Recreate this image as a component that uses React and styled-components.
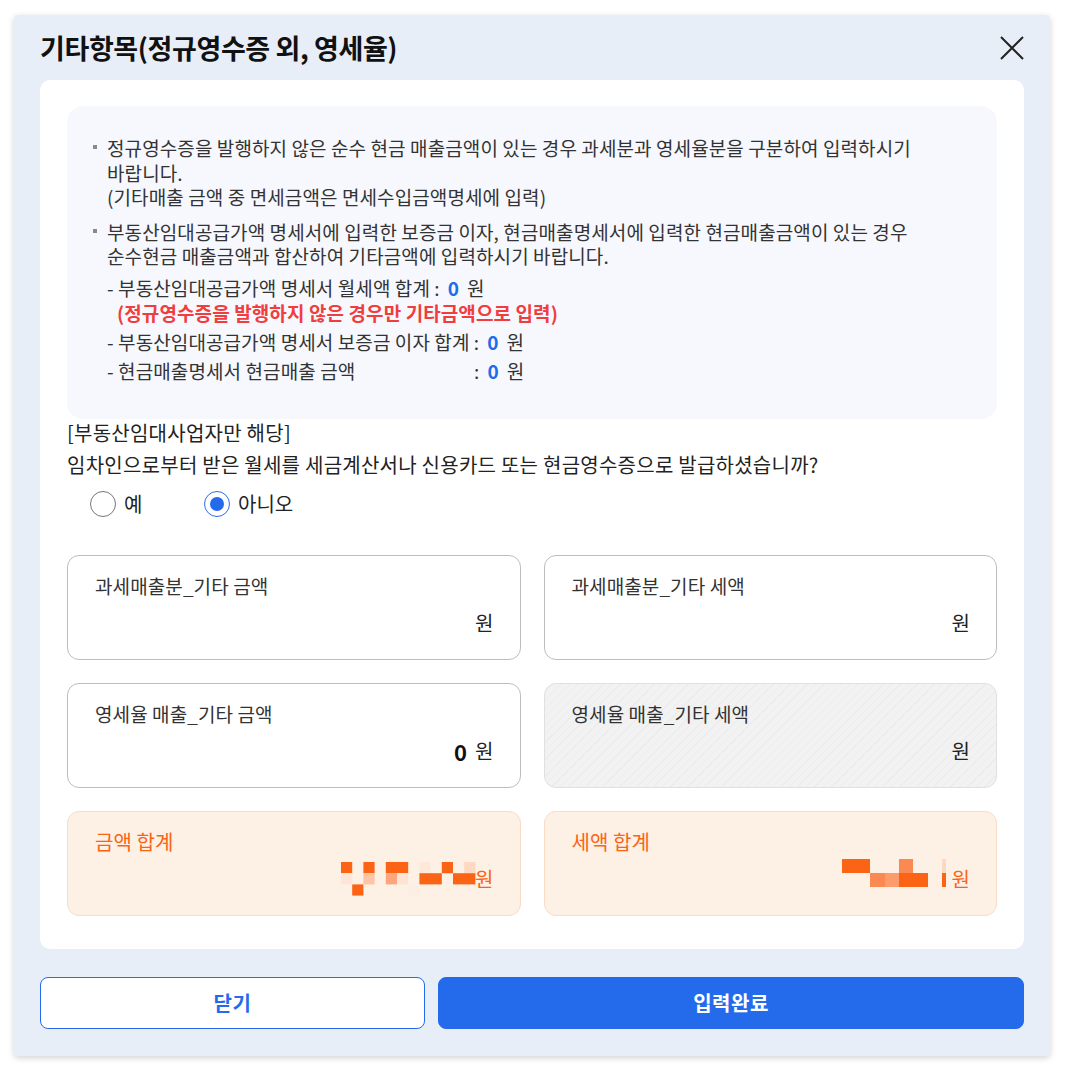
import React, { useState } from "react";
import styled, { createGlobalStyle } from "styled-components";

const GlobalStyle = createGlobalStyle`
  * { box-sizing: border-box; }
  body {
    margin: 0;
    background: #ffffff;
    font-family: "Noto Sans CJK KR", "Noto Sans", sans-serif;
    color: #222;
  }
`;

const Modal = styled.div`
  margin: 15px 15px 15px 14px;
  width: 1036px;
  background: #e8eef8;
  border-radius: 4px;
  box-shadow: 0 2px 6px rgba(0, 0, 0, 0.18);
  padding: 0 26px 27px;
`;

const Header = styled.div`
  height: 65px;
  display: flex;
  align-items: center;
  justify-content: space-between;
`;

const Title = styled.h1`
  margin: 0;
  font-size: 27px;
  font-weight: 600;
  color: #111;
  letter-spacing: -0.4px;
`;

const CloseButton = styled.button`
  display: flex;
  align-items: center;
  justify-content: center;
  width: 30px;
  height: 30px;
  margin-right: -3px;
  padding: 0;
  background: transparent;
  border: none;
  cursor: pointer;
`;

const Card = styled.div`
  background: #ffffff;
  border-radius: 10px;
  padding: 26px 27px 33px;
`;

const InfoBox = styled.div`
  background: #f6f8fe;
  border-radius: 16px;
  padding: 30px 26px 36px;
  font-size: 19px;
  line-height: 24.5px;
  color: #333;
  letter-spacing: 0.1px;
`;

const Bullet = styled.div`
  position: relative;
  padding-left: 14px;
  & + & {
    margin-top: 10px;
  }
  &::before {
    content: "";
    position: absolute;
    left: 0;
    top: 9px;
    width: 4px;
    height: 4px;
    background: #8a8a8a;
  }
`;

const SubList = styled.div`
  margin-top: 6px;
`;

const SubItem = styled.div`
  margin-top: ${(p) => (p.$first ? "0" : "4px")};
  line-height: 25px;
`;

const SubLabel = styled.span`
  display: inline-block;
  width: ${(p) => (p.$width ? `${p.$width}px` : "auto")};
`;

const Zero = styled.b`
  color: #1d6ce9;
  font-weight: 700;
  margin: 0 8px 0 8px;
`;

const RedNote = styled.div`
  color: #f03d3d;
  font-weight: 700;
  padding-left: 10px;
  line-height: 25px;
`;

const Question = styled.div`
  margin-top: -2px;
  font-size: 20px;
  line-height: 32px;
  color: #222;
  letter-spacing: 0.25px;
`;

const RadioRow = styled.div`
  margin-top: 8px;
  height: 30px;
  display: flex;
  align-items: center;
  padding-left: 23px;
`;

const RadioLabel = styled.label`
  display: flex;
  align-items: center;
  gap: 8px;
  width: ${(p) => p.$width}px;
  font-size: 20px;
  color: #222;
  cursor: pointer;
`;

const RadioCircle = styled.span`
  width: 26px;
  height: 26px;
  border-radius: 50%;
  border: 1px solid ${(p) => (p.$checked ? "#2b6fe8" : "#777")};
  background: #fff;
  display: flex;
  align-items: center;
  justify-content: center;
  &::after {
    content: "";
    width: 14px;
    height: 14px;
    border-radius: 50%;
    background: #246beb;
    display: ${(p) => (p.$checked ? "block" : "none")};
  }
`;

const FieldGrid = styled.div`
  margin-top: 36px;
  display: grid;
  grid-template-columns: 1fr 1fr;
  gap: 23px;
`;

const Field = styled.div`
  height: 105px;
  border-radius: 12px;
  padding: 18px 26px 0 27px;
  border: 1px solid
    ${(p) =>
      p.$variant === "sum"
        ? "#f8dcc6"
        : p.$variant === "disabled"
        ? "#e0e0e0"
        : "#bdbdbd"};
  background: ${(p) =>
    p.$variant === "sum"
      ? "#fdf0e5"
      : p.$variant === "disabled"
      ? "repeating-linear-gradient(135deg, #f2f2f2 0 5px, #ececec 5px 6px)"
      : "#ffffff"};
`;

const FieldLabel = styled.div`
  font-size: ${(p) => (p.$sum ? "20px" : "19px")};
  line-height: 24px;
  letter-spacing: 0.1px;
  color: ${(p) => (p.$sum ? "#fa6414" : "#333")};
`;

const ValueRow = styled.div`
  margin-top: 8px;
  height: 34px;
  display: flex;
  align-items: center;
  justify-content: flex-end;
`;

const Amount = styled.span`
  font-size: 22px;
  font-weight: 600;
  color: #111;
  margin-right: 8px;
`;

const Won = styled.span`
  font-size: 20px;
  color: ${(p) => (p.$sum ? "#fa6414" : "#222")};
`;

const Footer = styled.div`
  margin-top: 28px;
  display: flex;
  gap: 13px;
`;

const Button = styled.button`
  height: 52px;
  border-radius: 8px;
  font-family: inherit;
  font-size: 20px;
  font-weight: 700;
  letter-spacing: 0.5px;
  cursor: pointer;
  border: 1px solid #246beb;
  ${(p) =>
    p.$primary
      ? `flex: 1; background: #246beb; color: #fff;`
      : `width: 385px; background: #fff; color: #246beb;`}
`;

const OR = "#fa6414";

// 합계 값은 모자이크 처리되어 있음
const leftMosaic = [
  [0, 0, 1, OR], [2, 0, 1, OR], [4, 0, 2, OR], [7, 0, 1, "#fde8da"], [9, 0, 1, OR], [11, 0, 1, "#fed9c2"],
  [0, 1, 1, "#fde6d8"], [2, 1, 1, "#fec4a4"], [4, 1, 1, "#fda57e"], [5, 1, 1, "#fde3d4"], [7, 1, 2, OR], [10, 1, 2, OR],
  [1, 2, 1, OR], [6, 2, 1, "#fdeee4"],
];

const rightMosaic = [
  [0, -3, 28, 14, OR], [57, -3, 14, 14, "#fb8a52"], [100, -3, 4, 14, "#fdd9c2"],
  [28, 11, 15, 14, "#fb8a52"], [43, 11, 14, 14, "#fc9c6c"], [57, 11, 29, 14, OR], [100, 11, 4, 14, OR],
];

const LeftMosaic = () => (
  <svg width="134" height="34" style={{ overflow: "visible" }}>
    {leftMosaic.map(([c, r, w, fill], i) => (
      <rect key={i} x={c * 11.2} y={r * 11.2} width={w * 11.2} height="11.2" fill={fill} />
    ))}
  </svg>
);

const RightMosaic = () => (
  <svg width="104" height="34" style={{ overflow: "visible", marginRight: 6 }}>
    {rightMosaic.map(([x, y, w, h, fill], i) => (
      <rect key={i} x={x} y={y} width={w} height={h} fill={fill} />
    ))}
  </svg>
);

const CloseIcon = () => (
  <svg width="26" height="26" viewBox="0 0 26 26">
    <path d="M2 2 L24 24 M24 2 L2 24" stroke="#222" strokeWidth="2" fill="none" />
  </svg>
);

const App = () => {
  const [issued, setIssued] = useState(false);

  return (
    <>
      <GlobalStyle />
      <Modal>
        <Header>
          <Title>기타항목(정규영수증 외, 영세율)</Title>
          <CloseButton>
            <CloseIcon />
          </CloseButton>
        </Header>

        <Card>
          <InfoBox>
            <Bullet>
              정규영수증을 발행하지 않은 순수 현금 매출금액이 있는 경우 과세분과 영세율분을 구분하여 입력하시기
              <br />
              바랍니다.
              <br />
              (기타매출 금액 중 면세금액은 면세수입금액명세에 입력)
            </Bullet>
            <Bullet>
              부동산임대공급가액 명세서에 입력한 보증금 이자, 현금매출명세서에 입력한 현금매출금액이 있는 경우
              <br />
              순수현금 매출금액과 합산하여 기타금액에 입력하시기 바랍니다.
              <SubList>
                <SubItem $first>
                  - <SubLabel>부동산임대공급가액 명세서 월세액 합계 :</SubLabel>
                  <Zero>0</Zero>원
                </SubItem>
                <RedNote>(정규영수증을 발행하지 않은 경우만 기타금액으로 입력)</RedNote>
                <SubItem>
                  - <SubLabel>부동산임대공급가액 명세서 보증금 이자 합계 :</SubLabel>
                  <Zero>0</Zero>원
                </SubItem>
                <SubItem>
                  - <SubLabel $width={356}>현금매출명세서 현금매출 금액</SubLabel>:
                  <Zero>0</Zero>원
                </SubItem>
              </SubList>
            </Bullet>
          </InfoBox>

          <Question>
            [부동산임대사업자만 해당]
            <br />
            임차인으로부터 받은 월세를 세금계산서나 신용카드 또는 현금영수증으로 발급하셨습니까?
          </Question>

          <RadioRow>
            <RadioLabel $width={114} onClick={() => setIssued(true)}>
              <RadioCircle $checked={issued} />
              예
            </RadioLabel>
            <RadioLabel $width={120} onClick={() => setIssued(false)}>
              <RadioCircle $checked={!issued} />
              아니오
            </RadioLabel>
          </RadioRow>

          <FieldGrid>
            <Field>
              <FieldLabel>과세매출분_기타 금액</FieldLabel>
              <ValueRow>
                <Won>원</Won>
              </ValueRow>
            </Field>
            <Field>
              <FieldLabel>과세매출분_기타 세액</FieldLabel>
              <ValueRow>
                <Won>원</Won>
              </ValueRow>
            </Field>
            <Field>
              <FieldLabel>영세율 매출_기타 금액</FieldLabel>
              <ValueRow>
                <Amount>0</Amount>
                <Won>원</Won>
              </ValueRow>
            </Field>
            <Field $variant="disabled">
              <FieldLabel>영세율 매출_기타 세액</FieldLabel>
              <ValueRow>
                <Won>원</Won>
              </ValueRow>
            </Field>
            <Field $variant="sum">
              <FieldLabel $sum>금액 합계</FieldLabel>
              <ValueRow>
                <LeftMosaic />
                <Won $sum>원</Won>
              </ValueRow>
            </Field>
            <Field $variant="sum">
              <FieldLabel $sum>세액 합계</FieldLabel>
              <ValueRow>
                <RightMosaic />
                <Won $sum>원</Won>
              </ValueRow>
            </Field>
          </FieldGrid>
        </Card>

        <Footer>
          <Button>닫기</Button>
          <Button $primary>입력완료</Button>
        </Footer>
      </Modal>
    </>
  );
};

export default App;
